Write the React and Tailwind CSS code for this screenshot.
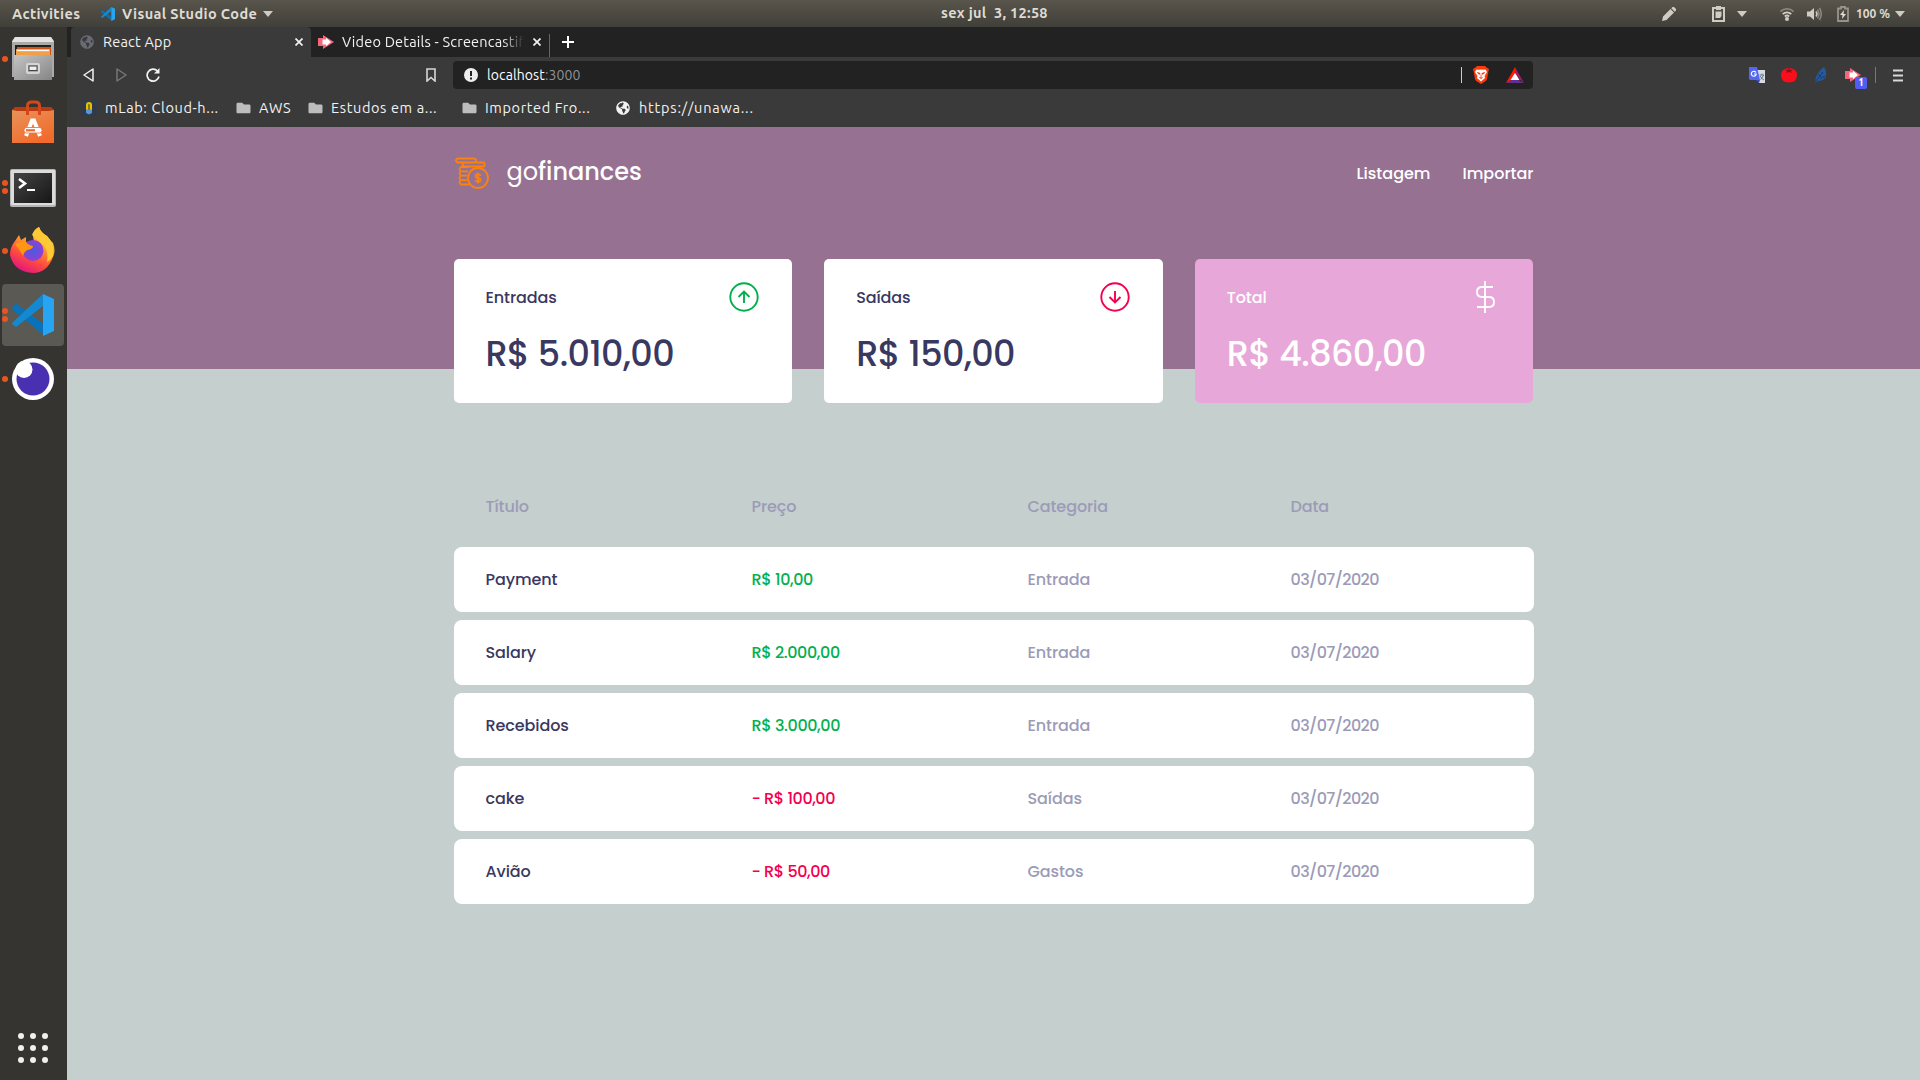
import { FaGlobeAmericas, FaFolder } from "react-icons/fa";

const transactions = [
  { title: "Payment", price: "R$ 10,00", category: "Entrada", income: true },
  { title: "Salary", price: "R$ 2.000,00", category: "Entrada", income: true },
  { title: "Recebidos", price: "R$ 3.000,00", category: "Entrada", income: true },
  { title: "cake", price: "- R$ 100,00", category: "Saídas", income: false },
  { title: "Avião", price: "- R$ 50,00", category: "Gastos", income: false },
];

function CodeLogo({ className }) {
  return (
    <svg viewBox="0 0 42 42" className={className}>
      <path d="M0 13 4 9.500 33 31v11L1 16Z" fill="#0a72b8" />
      <path d="M0 29 31 0v12L4 33 0 30Z" fill="#1489d0" />
      <path d="M31 0 42 5v32l-11 5Z" fill="#27a4f2" />
    </svg>
  );
}

function Caret() {
  return (
    <svg viewBox="0 0 10 6" className="h-[6px] w-[10px]">
      <path d="M0 0h10L5 6Z" fill="#cfccc4" />
    </svg>
  );
}

function Screencast({ className }) {
  return (
    <svg viewBox="0 0 16 14" className={className}>
      <path d="M0 3h5V0l11 7-11 7v-3H0Z" fill="#f4667a" />
      <path d="M4.500 4.500H8V2.800L13 7l-5 4.200V9.500H4.500Z" fill="#fff" />
    </svg>
  );
}

function Close() {
  return (
    <svg viewBox="0 0 8 8" className="h-2 w-2 shrink-0" stroke="#f2f2f2" strokeWidth="1.700">
      <path d="m.5.5 7 7m0-7-7 7" />
    </svg>
  );
}

function TopBar() {
  return (
    <div className="flex h-[27px] items-center bg-linear-to-b from-[#59554c] to-[#403f39] text-[14.500px] font-semibold tracking-[0.380px] text-[#dfdbd2]">
      <span className="ml-3 w-[89px] whitespace-nowrap">Activities</span>
      <CodeLogo className="h-[14px] w-[14px]" />
      <span className="ml-[7px] w-[141px] whitespace-nowrap">Visual Studio Code</span>
      <Caret />
      <span className="ml-[668px] w-[120px] whitespace-pre pb-px tracking-[0.300px]">sex jul  3, 12:58</span>
      <div className="ml-auto flex items-center pr-[15px]">
        <svg viewBox="0 0 14 14" className="h-[14px] w-[14px]" fill="#cfccc4">
          <path d="m0 14 1-4.500 7.500-7.500 3.500 3.500L4.500 13ZM9.300 1.200 10.500 0h1.500l2 2v1.500l-1.200 1.200Z" />
        </svg>
        <svg viewBox="0 0 13 16" className="ml-9 h-4 w-[13px]" fill="none" stroke="#cfccc4">
          <path d="M4 2H1v13h11V2H9" strokeWidth="2" />
          <path d="M4 0h5v4H4Z" fill="#cfccc4" stroke="none" />
          <path d="M3.500 5.500h6V10L8 12H3.500Z" fill="#cfccc4" stroke="none" />
        </svg>
        <span className="ml-3 mr-[33px] flex"><Caret /></span>
        <svg viewBox="0 0 14 14" className="h-[14px] w-[14px]" fill="none" strokeWidth="1.800">
          <path d="M.5 4.500C4 1 10 1 13.500 4.500" stroke="#8a877f" />
          <path d="M2.700 7.200c2.500-2.500 6.100-2.500 8.600 0M4.800 9.500c1.300-1.200 3.100-1.200 4.400 0" stroke="#cfccc4" />
          <circle cx="7" cy="12" r="2" fill="#cfccc4" />
        </svg>
        <svg viewBox="0 0 15 14" className="ml-[13px] h-[14px] w-[15px]" fill="none" strokeWidth="1.500">
          <path d="M0 4.500h3L7 1v12L3 9.500H0Z" fill="#cfccc4" />
          <path d="M9 4.500q2 2.500 0 5" stroke="#cfccc4" />
          <path d="M10.500 2.500q3 4.500 0 9M12.500 1q3.500 6 0 12" stroke="#8a877f" />
        </svg>
        <svg viewBox="0 0 12 16" className="ml-[15px] h-4 w-3" fill="none">
          <path d="M4 1h4v1.500h3V15H1V2.500h3Z" stroke="#96938b" strokeWidth="1.800" />
          <path d="M7 4 3 9h2.500L5 13l4-5H6.500Z" fill="#e0ddd5" />
        </svg>
        <span className="ml-[7px] w-[39px] whitespace-nowrap text-[12px] tracking-normal">100 %</span>
        <Caret />
      </div>
    </div>
  );
}

function DockItem({ dots, active, children }) {
  return (
    <div className={active ? "relative flex h-[62px] items-center justify-center rounded bg-[#5a5953]" : "relative flex h-[62px] items-center justify-center"}>
      <div className="absolute left-0 top-0 flex h-full flex-col items-center justify-center gap-[2px]">
        {Array.from({ length: dots }, (_, i) => (
          <i key={i} className="h-[6px] w-[6px] rounded-full bg-[#e95420]" />
        ))}
      </div>
      {children}
    </div>
  );
}

function Dock() {
  return (
    <aside className="flex w-[67px] shrink-0 flex-col gap-[2px] bg-[#353430] pl-[2px] pr-[3px] pt-px">
      <DockItem dots={1}>
        <svg viewBox="0 0 42 44" className="h-11 w-[42px]">
          <defs>
            <linearGradient id="cab" x1="0" y1="0" x2="1" y2="1">
              <stop stopColor="#c4c4c4" /><stop offset="1" stopColor="#858585" />
            </linearGradient>
          </defs>
          <path d="M0 40V4l3-4h36l3 4v36Z" fill="#aaa" />
          <path d="M0 5 3 0h36l3 5Z" fill="#e2e2e2" />
          <path d="M3 8h36v12H3Z" fill="#24201c" />
          <path d="M5 10h34v8H5Z" fill="#d35418" />
          <path d="M4 12h34v7H4Z" fill="#f2a048" />
          <path d="M5 13.500h32" stroke="#fff" strokeWidth="1.300" />
          <path d="M2 18h38v25H2Z" fill="url(#cab)" />
          <rect x="15" y="27" width="12" height="9" rx="1" fill="#aaa" stroke="#d5d5d5" strokeWidth="2" />
          <rect x="17" y="29" width="8" height="4.500" fill="#eee" stroke="#444" />
        </svg>
      </DockItem>
      <DockItem dots={0}>
        <svg viewBox="0 0 42 44" className="-mt-[2px] h-11 w-[42px]">
          <defs>
            <linearGradient id="bag" x1="0" y1="0" x2=".6" y2="1">
              <stop stopColor="#e8935a" /><stop offset="1" stopColor="#f16b2c" />
            </linearGradient>
          </defs>
          <path d="m0 10 3-3h36l3 3v4H0Z" fill="#b83c11" />
          <path d="M0 10 5 11h32l5-1v33H0Z" fill="url(#bag)" />
          <path d="M15.500 15V6q0-4 4-4h4q4 0 4 4v9" fill="none" stroke="#d4471a" strokeWidth="3" />
          <path d="m14 36 6-15.500h2L28 36" fill="none" stroke="#fff" strokeWidth="4" />
          <rect x="12" y="27.500" width="18" height="5.500" rx="2.500" fill="#fff" stroke="#ee6a2c" strokeWidth=".8" />
          <path d="M14 30.300h9" stroke="#ee6a2c" strokeWidth="2.200" />
        </svg>
      </DockItem>
      <DockItem dots={2}>
        <svg viewBox="0 0 46 38" className="mt-[2px] h-[38px] w-[46px]">
          <defs>
            <linearGradient id="term" x1="0" y1="0" x2="1" y2="1">
              <stop stopColor="#444" /><stop offset="1" stopColor="#161616" />
            </linearGradient>
          </defs>
          <rect width="46" height="38" rx="2" fill="#b5b5b5" />
          <rect x="1" y="1" width="44" height="35" rx="1" fill="#dcdcdc" />
          <rect x="4" y="4" width="38" height="30" fill="url(#term)" />
          <path d="m9 10 6 4.500L9 19" fill="none" stroke="#fff" strokeWidth="2.600" />
          <path d="M17 21h8" stroke="#fff" strokeWidth="2" />
        </svg>
      </DockItem>
      <DockItem dots={1}>
        <svg viewBox="0 0 46 46" className="-mt-[2px] h-[46px] w-[46px]">
          <defs>
            <linearGradient id="fox" x1=".8" y1="0" x2=".3" y2="1">
              <stop stopColor="#fff44f" /><stop offset=".35" stopColor="#ffa52e" /><stop offset=".7" stopColor="#ff4940" /><stop offset="1" stopColor="#e01284" />
            </linearGradient>
            <radialGradient id="orb">
              <stop stopColor="#4a5ae0" /><stop offset="1" stopColor="#9040d5" />
            </radialGradient>
          </defs>
          <path d="M5 14 9 8l2 5 5-3 0 5q4-1 8 0l-1-6q2-6 6-9 2 6 8 9l4 5 2 2q3 8 0 14-6 16-20 16Q4 45 0 28q0-8 5-14Z" fill="url(#fox)" />
          <circle cx="23" cy="23.500" r="10.500" fill="url(#orb)" />
          <path d="M5 17q6-3 11-2 2 3 7 4 0 3-6 4-3 2-4 6-3-6-8-12Z" fill="#ff980e" />
          <path d="M22 8q2-6 7-8 2 6 8 9 8 8 6 20-2 4-6 6 2-13-5-18Z" fill="#ffc936" />
        </svg>
      </DockItem>
      <DockItem dots={2} active>
        <CodeLogo className="h-[42px] w-[42px]" />
      </DockItem>
      <DockItem dots={1}>
        <svg viewBox="0 0 42 42" className="h-[42px] w-[42px]">
          <circle cx="21" cy="21" r="21" fill="#fff" />
          <circle cx="21" cy="21" r="16.500" fill="#4930b0" />
          <circle cx="12" cy="11.500" r="8.500" fill="#fff" />
        </svg>
      </DockItem>
      <div className="mb-[17px] ml-4 mt-auto grid w-[30px] grid-cols-3 gap-[6px]">
        {Array.from({ length: 9 }, (_, i) => (
          <i key={i} className="h-[6px] w-[6px] rounded-full bg-[#f1f0ed]" />
        ))}
      </div>
    </aside>
  );
}

function Browser() {
  return (
    <div className="text-[14.500px] text-[#f2f2f2]">
      <div className="flex h-[30px] items-stretch bg-[#222] tracking-[0.200px]">
        <div className="ml-1 flex w-60 items-center rounded-t bg-[#3a3a3a] pl-[9px] pr-2">
          <FaGlobeAmericas className="h-[14px] w-[14px] text-[#686b73]" />
          <span className="ml-[9px] mr-auto whitespace-nowrap">React App</span>
          <Close />
        </div>
        <div className="flex w-[238px] items-center pl-[7px] pr-2">
          <Screencast className="h-[14px] w-4 shrink-0" />
          <span className="ml-2 mr-auto whitespace-nowrap mask-r-from-88% mask-r-to-100%">
            Video Details - Screencastif
          </span>
          <Close />
        </div>
        <div className="mt-[7px] w-px bg-[#666]" />
        <svg viewBox="0 0 12 12" className="ml-3 h-3 w-3 self-center" stroke="#fff" strokeWidth="2">
          <path d="M6 0v12M0 6h12" />
        </svg>
      </div>
      <div className="flex h-9 items-center bg-[#3a3a3a]">
        <svg viewBox="0 0 11 14" className="ml-4 h-[14px] w-[11px]" fill="none" stroke="#f2f2f2" strokeWidth="1.500">
          <path d="M10 1v12L1 7Z" strokeLinejoin="round" />
        </svg>
        <svg viewBox="0 0 11 14" className="ml-[22px] h-[14px] w-[11px]" fill="none" stroke="#777" strokeWidth="1.500">
          <path d="M1 1v12l9-6Z" strokeLinejoin="round" />
        </svg>
        <svg viewBox="0 0 14 14" className="ml-[19px] h-[14px] w-[14px]" fill="none" stroke="#f2f2f2" strokeWidth="1.700">
          <path d="M11.500 3A6 6 0 1 0 13 8.500" />
          <path d="M13.500 0v5.500H8Z" fill="#f2f2f2" stroke="none" />
        </svg>
        <svg viewBox="0 0 10 14" className="ml-[266px] h-[14px] w-[10px]" fill="none" stroke="#d8d8d8" strokeWidth="1.600">
          <path d="M1 1h8v12L5 9.500 1 13Z" />
        </svg>
        <div className="ml-[17px] flex h-7 w-[1080px] items-center rounded bg-[#222] pl-[11px] pr-[9px]">
          <svg viewBox="0 0 14 14" className="h-[14px] w-[14px]">
            <circle cx="7" cy="7" r="7" fill="#eee" />
            <path d="M7 3v5M7 9.500v2" stroke="#222" strokeWidth="2" />
          </svg>
          <span className="ml-[9px] whitespace-nowrap text-[14px] tracking-[0.100px] text-white">
            localhost<span className="text-[#8f9196]">:3000</span>
          </span>
          <i className="ml-auto h-4 w-px bg-[#ccc]" />
          <svg viewBox="0 0 16 18" className="ml-[11px] h-[18px] w-4">
            <path d="M4 0h8l1.500 1.500L16 3l-.7 3L14 13q-.500 1.500-2 2.500L8 18l-4-2.500Q2.500 14.500 2 13L.7 6 0 3l2.500-1.500Z" fill="#fb3b0c" />
            <path d="m3.500 3.500 2 .3L8 3.500l2.500.3 2-.3L14 6l-2.500 4 .5 2-4 3.500L4 12l.500-2L2 6Z" fill="#fff" />
            <path d="m4.500 6.500 2.500.8v1L5 7.500Zm7 0L9 7.300v1l2-.8ZM8 8.500v3M6.300 11.500 8 12.500l1.700-1" fill="#fb3b0c" stroke="#fb3b0c" strokeWidth=".8" />
          </svg>
          <svg viewBox="0 0 18 16" className="ml-[17px] h-4 w-[18px]">
            <path d="M9 0 0 16l9-5Z" fill="#ff1a00" />
            <path d="M9 0v8l9 8Z" fill="#9e1f63" />
            <path d="m0 16 9-5 9 5Z" fill="#662d91" />
            <path d="m9 6 4.500 7h-9Z" fill="#fff" />
          </svg>
        </div>
        <div className="ml-auto flex items-center pr-[17px]">
          <svg viewBox="0 0 16 16" className="h-4 w-4">
            <path d="M6 3h10v13h-6Z" fill="#d5dbe0" />
            <path d="M0 0h8l3 13H1l-1-1Z" fill="#5367f5" />
            <path d="m7 13 4 0-1 3Z" fill="#3548c8" />
            <path d="M7 5.500A2.500 2.500 0 1 0 7 8V7H5" fill="none" stroke="#fff" strokeWidth="1.200" />
            <path d="M10.500 8h4.500M13 6.500V8m1.500 0q-1 3-3 4.500M11 9q2 3 4 4" stroke="#61788c" fill="none" />
          </svg>
          <svg viewBox="0 0 16 16" className="ml-4 h-4 w-4">
            <path d="M5 1.500Q8 .5 11 1.500q5 1.500 5 6.500 0 7.500-8 7.500T0 8q0-5 5-6.500Z" fill="#fb0d1b" />
            <path d="m4 2.500 3 .5 1-2.500L9 3l3-.5-2 2 .8 1.500L8 5l-2.800 1L6 4.500Z" fill="#8c1016" />
          </svg>
          <svg viewBox="0 0 11 16" className="ml-[18px] h-4 w-[11px]">
            <path d="M9 0q4 6 1 11-2 3-7 3l-3 2Q0 6 9 0Z" fill="#26599b" />
            <path d="M0 15 8 5M3 7l3 3M5 12l5-3" stroke="#173d70" fill="none" />
          </svg>
          <span className="relative ml-[19px] flex">
            <Screencast className="h-[14px] w-4" />
            <b className="absolute left-[10px] top-[9px] flex h-3 w-3 items-center justify-center rounded-[2px] bg-[#535cf2] text-[10px] leading-none text-white">1</b>
          </span>
          <i className="ml-[14px] h-4 w-px bg-[#777]" />
          <svg viewBox="0 0 10 13" className="ml-[17px] h-[13px] w-[10px]" stroke="#d8d8d8" strokeWidth="2">
            <path d="M0 1.500h10M0 6.500h10M0 11.500h10" />
          </svg>
        </div>
      </div>
      <div className="flex h-[34px] items-center whitespace-nowrap bg-[#3a3a3a] pb-[4px] tracking-[0.620px]">
        <svg viewBox="0 0 16 16" className="ml-[14px] h-4 w-4">
          <path d="M0 0h16v16H0Z" fill="#303b4a" />
          <path d="M6 10V5a2 2 0 0 1 4 0v5" fill="#8a7500" stroke="#e8c000" strokeWidth="2" />
          <path d="M5 9.500h6V13l-3 1.500L5 13Z" fill="#5795dc" />
        </svg>
        <span className="ml-2 w-[131px]">mLab: Cloud-h...</span>
        <FaFolder className="h-[14px] w-[15px] text-[#bdbdbd]" />
        <span className="ml-2 w-[49px]">AWS</span>
        <FaFolder className="h-[14px] w-[15px] text-[#bdbdbd]" />
        <span className="ml-2 w-[131px]">Estudos em a...</span>
        <FaFolder className="h-[14px] w-[15px] text-[#bdbdbd]" />
        <span className="ml-2 w-[131px]">Imported Fro...</span>
        <FaGlobeAmericas className="h-[14px] w-[14px] text-[#f2f2f2]" />
        <span className="ml-[9px] tracking-[0.800px]">https://unawa...</span>
      </div>
    </div>
  );
}

function ArrowCircle({ down }) {
  return (
    <svg viewBox="0 0 30 30" className="mr-px h-[30px] w-[30px]" fill="none" stroke={down ? "#f5004f" : "#00b04f"} strokeWidth="1.900">
      <circle cx="15" cy="15" r="13.700" />
      <path d={down ? "M15 9v11.500M9.500 15l5.500 5.500 5.500-5.500" : "M15 21V9.500M9.500 15 15 9.500l5.500 5.500"} />
    </svg>
  );
}

function Card({ label, value, icon, total }) {
  return (
    <div className={total ? "h-36 rounded-[5px] bg-[#e7a7d9] px-8 pt-[22px] text-white" : "h-36 rounded-[5px] bg-white px-8 pt-[22px] text-[#393860]"}>
      <div className="flex h-8 items-center justify-between">
        <span className="pt-[2px] font-medium tracking-[-0.100px]">{label}</span>
        {icon}
      </div>
      <div className="mt-[14px] text-[35px] font-medium leading-[54px] tracking-[-0.550px]">{value}</div>
    </div>
  );
}

function Page() {
  return (
    <main className="flex-1 bg-[#c5cfcd] font-['Poppins','Inter',sans-serif] text-base [font-feature-settings:'cv11']">
      <div className="h-[242px] bg-[#967192]">
        <header className="mx-auto flex w-[1080px] items-center justify-between pt-[30px]">
          <div className="flex h-8 items-center">
            <svg viewBox="0 0 34 32" className="ml-px h-8 w-[34px]" fill="none" stroke="#f98210" strokeWidth="1.800">
              <rect x="1" y="1.500" width="20" height="4" rx="2" />
              <path d="M8 5.500v2q0 2 2 2h19q1.500-2 0-4H21M6 9.500h4" />
              <path d="M13 10H6q-3 2.200 0 4.300h7M13 14.300H6q-3 2.200 0 4.400h6M12 18.700H6q-3 2.200 0 4.400h6M12 23.100H6q-3 2.200 0 4.400h9" />
              <circle cx="23" cy="21" r="10" fill="#967192" />
              <path d="M25.500 19q-.5-2-2.500-2-2.500 0-2.500 2t2.500 2 2.500 2-2.500 2q-2 0-2.500-2M23 15.500v11" />
            </svg>
            <span className="ml-[18px] pb-[2px] text-2xl text-white">go<span className="font-medium">finances</span></span>
          </div>
          <nav className="flex gap-8 pt-[2px] font-medium text-white">
            <span>Listagem</span>
            <span>Importar</span>
          </nav>
        </header>
        <section className="mx-auto mt-[70px] grid w-[1080px] grid-cols-3 gap-8">
          <Card label="Entradas" value="R$ 5.010,00" icon={<ArrowCircle />} />
          <Card label="Saídas" value="R$ 150,00" icon={<ArrowCircle down />} />
          <Card
            label="Total" value="R$ 4.860,00" total
            icon={
              <svg viewBox="0 0 32 32" className="h-8 w-8" fill="none" stroke="#fff" strokeWidth="1.900">
                <path d="M16 0v32M24 6h-11q-5 0-5 5t5 5h7q5 0 5 5t-5 5H8" />
              </svg>
            }
          />
        </section>
      </div>
      <section className="mx-auto mt-[126px] w-[1080px] font-medium">
        <div className="grid grid-cols-[266px_276px_263px_1fr] px-8 pb-7 leading-6 tracking-[-0.100px] text-[#9b9bb8]">
          <span>Título</span>
          <span>Preço</span>
          <span>Categoria</span>
          <span>Data</span>
        </div>
        <div className="flex flex-col gap-2">
          {transactions.map((t) => (
            <div key={t.title} className="grid h-[65px] grid-cols-[266px_276px_263px_1fr] items-center rounded-lg bg-white px-8 tracking-[-0.100px] text-[#9b9bb8]">
              <span className="text-[#393860]">{t.title}</span>
              <span className={t.income ? "tracking-[-0.400px] text-[#04b04f]" : "tracking-[-0.450px] text-[#f5004f]"}>{t.price}</span>
              <span>{t.category}</span>
              <span className="tracking-[-0.600px]">03/07/2020</span>
            </div>
          ))}
        </div>
      </section>
    </main>
  );
}

export default function App() {
  return (
    <div className="flex h-[1080px] w-[1920px] flex-col overflow-hidden font-['Ubuntu','Noto_Sans',sans-serif]">
      <TopBar />
      <div className="flex flex-1">
        <Dock />
        <div className="flex min-w-0 flex-1 flex-col">
          <Browser />
          <Page />
        </div>
      </div>
    </div>
  );
}
